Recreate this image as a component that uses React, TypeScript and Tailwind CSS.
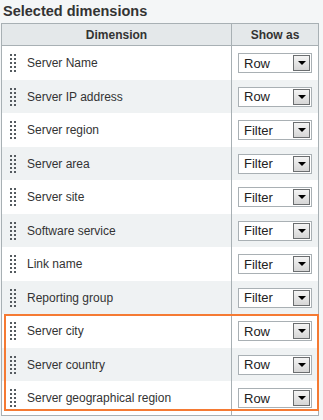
const rows = [
  { name: "Server Name", show: "Row" },
  { name: "Server IP address", show: "Row" },
  { name: "Server region", show: "Filter" },
  { name: "Server area", show: "Filter" },
  { name: "Server site", show: "Filter" },
  { name: "Software service", show: "Filter" },
  { name: "Link name", show: "Filter" },
  { name: "Reporting group", show: "Filter" },
  { name: "Server city", show: "Row" },
  { name: "Server country", show: "Row" },
  { name: "Server geographical region", show: "Row" },
];

function DragHandle() {
  return (
    <div className="grid grid-cols-2 gap-x-[2px] gap-y-[2px] w-[6px] shrink-0">
      {Array.from({ length: 10 }, (_, i) => (
        <span key={i} className="block w-[2px] h-[2px] bg-[#555b60]" />
      ))}
    </div>
  );
}

function ShowAsSelect({ value }: { value: string }) {
  return (
    <div className="flex items-center w-[74px] h-[20px] border border-[#a9b0b4] bg-white pl-[5px] pr-[1px]">
      <span className="flex-1 text-[13px] leading-none text-[#222]">{value}</span>
      <span className="flex items-center justify-center w-[17px] h-[16px] border border-[#6b6e70] bg-gradient-to-b from-[#f4f4f4] to-[#d6d6d6]">
        <span className="block w-0 h-0 border-l-[4px] border-r-[4px] border-t-[4px] border-l-transparent border-r-transparent border-t-black" />
      </span>
    </div>
  );
}

export default function App() {
  return (
    <div
      className="w-[323px] h-[420px] bg-[#f4f6f7] overflow-hidden text-[#333]"
      style={{ fontFamily: '"Liberation Sans", Arial, sans-serif' }}
    >
      <h2 className="pl-[3px] pt-[3px] h-[23px] text-[14.5px] font-bold leading-[16px] text-[#333]">
        Selected dimensions
      </h2>

      <div className="ml-[1px] w-[318px] border border-[#a8b0b4]">
        <div className="flex h-[22px] bg-[#e4e8ea] border-b border-[#a8b0b4] text-[12px] font-bold">
          <div className="w-[230px] flex items-center justify-center border-r border-[#a8b0b4]">Dimension</div>
          <div className="flex-1 flex items-center justify-center">Show as</div>
        </div>

        <div className="relative">
          {rows.map((r, i) => (
            <div
              key={r.name}
              className={`flex ${i % 2 === 0 ? "h-[34px] bg-white" : "h-[33px] bg-[#eff2f3]"}`}
            >
              <div className="w-[230px] flex items-center gap-[11px] pl-[8px] border-r border-[#a8b0b4] text-[12px]">
                <DragHandle />
                <span>{r.name}</span>
              </div>
              <div className="flex-1 flex items-center pl-[6px]">
                <ShowAsSelect value={r.show} />
              </div>
            </div>
          ))}
          <div className="absolute left-[2px] right-[-1px] top-[268px] h-[97px] border-2 border-[#f57a33] pointer-events-none" />
        </div>
      </div>
    </div>
  );
}
